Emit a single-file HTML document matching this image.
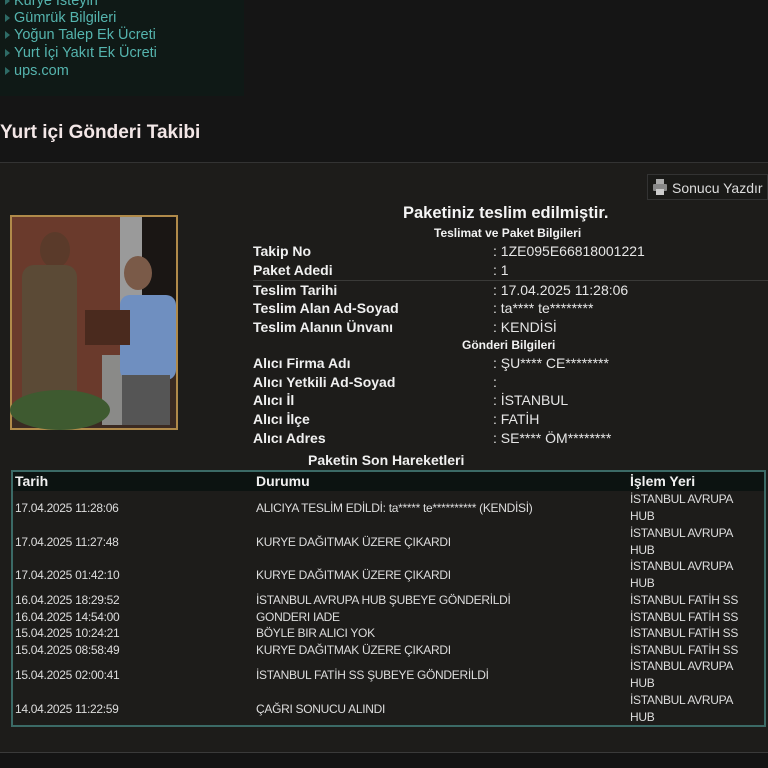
<!DOCTYPE html>
<html><head><meta charset="utf-8"><style>
*{margin:0;padding:0;box-sizing:border-box}
body{width:768px;height:768px;background:#151515;position:relative;overflow:hidden;font-family:"Liberation Sans",sans-serif;color:#e8e8e8}
.menu{position:absolute;left:0;top:0;width:244px;height:96px;background:#0f1916}
.menu div{position:absolute;left:14px;font-size:14.5px;color:#55b4ae;white-space:nowrap}
.menu div:before{content:"";position:absolute;left:-9px;top:4px;border-left:5px solid #2e6b66;border-top:4px solid transparent;border-bottom:4px solid transparent}
h1{position:absolute;left:0;top:122px;font-size:19px;font-weight:bold;color:#f3e7e7}
.sec{position:absolute;left:0;top:162px;width:768px;height:590px;background:#1d1c1a;border-top:1px solid #333}
.btn{position:absolute;left:647px;top:174px;width:121px;height:26px;border:1px solid #333;background:#1a1a18;font-size:14px;color:#ddd;padding:5px 0 0 24px}
.t{position:absolute;white-space:nowrap}
.lab{left:253px;font-size:14px;font-weight:bold;color:#f0f0f0}
.val{left:493px;font-size:14px;color:#e6e6e6}
.ctr{font-weight:bold;font-size:12px;color:#f2f2f2}
.tbl{position:absolute;left:11px;top:470px;width:755px;height:257px;border:2px solid #3b6a66;background:#1d1c1a}
.hd{position:absolute;left:0;top:0;width:751px;height:19px;background:#0c1311}
.n{font-family:"Liberation Sans Narrow","Liberation Sans",sans-serif;font-size:12px;letter-spacing:-0.3px;color:#ddd;position:absolute;white-space:nowrap;line-height:17px}
.h{font-family:"Liberation Sans",sans-serif;font-size:14px;font-weight:bold;color:#f0f0f0;position:absolute;top:1px}
</style></head><body>
<div class="menu">
<div style="top:-7px">Kurye İsteyin</div>
<div style="top:10px">Gümrük Bilgileri</div>
<div style="top:27px">Yoğun Talep Ek Ücreti</div>
<div style="top:45px">Yurt İçi Yakıt Ek Ücreti</div>
<div style="top:63px">ups.com</div>
</div>
<h1>Yurt içi Gönderi Takibi</h1>
<div class="sec"></div>
<div class="btn"><svg style="position:absolute;left:4px;top:3px" width="16" height="18" viewBox="0 0 16 18"><rect x="4" y="1" width="8" height="5" fill="#aaa"/><rect x="1" y="6" width="14" height="7" rx="1" fill="#888"/><rect x="4" y="11" width="8" height="6" fill="#ccc"/></svg>Sonucu Yazdır</div>
<svg style="position:absolute;left:10px;top:215px" width="168" height="215" viewBox="0 0 168 215">
<rect x="0" y="0" width="168" height="215" fill="#b08a4a"/>
<rect x="2" y="2" width="164" height="211" fill="#3a2a22"/>
<rect x="2" y="2" width="110" height="200" fill="#6a3a2c"/>
<rect x="110" y="2" width="22" height="200" fill="#9a9a9a"/>
<rect x="132" y="2" width="34" height="90" fill="#1a1614"/>
<rect x="92" y="140" width="26" height="70" fill="#8a8a88"/>
<ellipse cx="45" cy="35" rx="15" ry="18" fill="#5a3a2a"/>
<rect x="12" y="50" width="55" height="160" rx="12" fill="#5b4a36"/>
<ellipse cx="128" cy="58" rx="14" ry="17" fill="#7a5a48"/>
<rect x="110" y="80" width="56" height="85" rx="10" fill="#6f8fc0"/>
<rect x="112" y="160" width="48" height="50" fill="#555"/>
<rect x="75" y="95" width="45" height="35" fill="#4a2a1e"/>
<ellipse cx="50" cy="195" rx="50" ry="20" fill="#3e5a30"/>
</svg>
<div class="t" style="left:403px;top:204px;font-size:16.5px;font-weight:bold;color:#f5f5f5">Paketiniz teslim edilmiştir.</div>
<div class="t ctr" style="left:434px;top:226px">Teslimat ve Paket Bilgileri</div>
<div class="t lab" style="top:243px">Takip No</div><div class="t val" style="top:243px">: 1ZE095E66818001221</div>
<div class="t lab" style="top:262px">Paket Adedi</div><div class="t val" style="top:262px">: 1</div>
<div style="position:absolute;left:253px;top:280px;width:515px;height:1px;background:#3a3a38"></div>
<div class="t lab" style="top:282px">Teslim Tarihi</div><div class="t val" style="top:282px">: 17.04.2025 11:28:06</div>
<div class="t lab" style="top:300px">Teslim Alan Ad-Soyad</div><div class="t val" style="top:300px">: ta**** te********</div>
<div class="t lab" style="top:319px">Teslim Alanın Ünvanı</div><div class="t val" style="top:319px">: KENDİSİ</div>
<div class="t ctr" style="left:462px;top:338px">Gönderi Bilgileri</div>
<div class="t lab" style="top:355px">Alıcı Firma Adı</div><div class="t val" style="top:355px">: ŞU**** CE********</div>
<div class="t lab" style="top:374px">Alıcı Yetkili Ad-Soyad</div><div class="t val" style="top:374px">:</div>
<div class="t lab" style="top:392px">Alıcı İl</div><div class="t val" style="top:392px">: İSTANBUL</div>
<div class="t lab" style="top:411px">Alıcı İlçe</div><div class="t val" style="top:411px">: FATİH</div>
<div class="t lab" style="top:430px">Alıcı Adres</div><div class="t val" style="top:430px">: SE**** ÖM********</div>
<div class="t lab" style="left:308px;top:452px">Paketin Son Hareketleri</div>
<div class="tbl">
<div class="hd"></div>
<div class="h" style="left:2px">Tarih</div><div class="h" style="left:243px">Durumu</div><div class="h" style="left:617px">İşlem Yeri</div>
<div class="n" style="left:2px;top:28px">17.04.2025 11:28:06</div><div class="n" style="left:243px;top:28px">ALICIYA TESLİM EDİLDİ: ta***** te********** (KENDİSİ)</div><div class="n" style="left:617px;top:19px">İSTANBUL AVRUPA<br>HUB</div>
<div class="n" style="left:2px;top:62px">17.04.2025 11:27:48</div><div class="n" style="left:243px;top:62px">KURYE DAĞITMAK ÜZERE ÇIKARDI</div><div class="n" style="left:617px;top:53px">İSTANBUL AVRUPA<br>HUB</div>
<div class="n" style="left:2px;top:95px">17.04.2025 01:42:10</div><div class="n" style="left:243px;top:95px">KURYE DAĞITMAK ÜZERE ÇIKARDI</div><div class="n" style="left:617px;top:86px">İSTANBUL AVRUPA<br>HUB</div>
<div class="n" style="left:2px;top:120px">16.04.2025 18:29:52</div><div class="n" style="left:243px;top:120px">İSTANBUL AVRUPA HUB ŞUBEYE GÖNDERİLDİ</div><div class="n" style="left:617px;top:120px">İSTANBUL FATİH SS</div>
<div class="n" style="left:2px;top:137px">16.04.2025 14:54:00</div><div class="n" style="left:243px;top:137px">GONDERI IADE</div><div class="n" style="left:617px;top:137px">İSTANBUL FATİH SS</div>
<div class="n" style="left:2px;top:153px">15.04.2025 10:24:21</div><div class="n" style="left:243px;top:153px">BÖYLE BIR ALICI YOK</div><div class="n" style="left:617px;top:153px">İSTANBUL FATİH SS</div>
<div class="n" style="left:2px;top:170px">15.04.2025 08:58:49</div><div class="n" style="left:243px;top:170px">KURYE DAĞITMAK ÜZERE ÇIKARDI</div><div class="n" style="left:617px;top:170px">İSTANBUL FATİH SS</div>
<div class="n" style="left:2px;top:195px">15.04.2025 02:00:41</div><div class="n" style="left:243px;top:195px">İSTANBUL FATİH SS ŞUBEYE GÖNDERİLDİ</div><div class="n" style="left:617px;top:186px">İSTANBUL AVRUPA<br>HUB</div>
<div class="n" style="left:2px;top:229px">14.04.2025 11:22:59</div><div class="n" style="left:243px;top:229px">ÇAĞRI SONUCU ALINDI</div><div class="n" style="left:617px;top:220px">İSTANBUL AVRUPA<br>HUB</div>
</div>
<div style="position:absolute;left:0;top:752px;width:768px;height:16px;background:#141414;border-top:1px solid #3a3a3a"></div>
</body></html>
